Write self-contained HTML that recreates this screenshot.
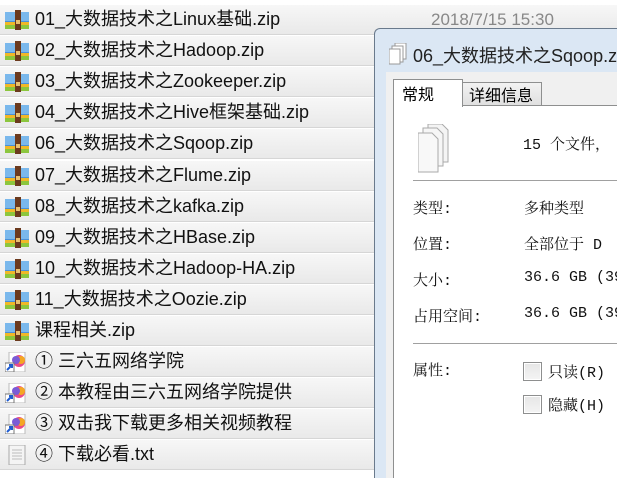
<!DOCTYPE html>
<html><head><meta charset="utf-8"><style>
*{margin:0;padding:0;box-sizing:border-box}
html,body{width:617px;height:478px;overflow:hidden}
body{background:#fff;position:relative;font-family:"Liberation Sans","Noto Sans CJK SC",sans-serif}
.row{position:absolute;left:0;width:617px;height:31px;background:linear-gradient(#f7f7f7,#e9e9e9);border-top:1px solid #fff;border-bottom:1px solid #d6d6d6;font-size:18px;color:#111;line-height:29px}
.row span{position:absolute;left:35px;top:0;white-space:nowrap}
.ic{position:absolute;left:5px;top:5px;width:24px;height:20px}
.dlg{position:absolute;left:374px;top:28px;width:243px;height:450px;background:#dbe7f4;border:1px solid #6a7a8c;border-right:none;border-bottom:none;border-radius:6px 0 0 0;overflow:hidden}
.title{position:absolute;left:38px;top:13px;font-size:18px;color:#222;white-space:nowrap}
.client{position:absolute;left:11px;top:43px;width:240px;height:420px;background:#f0f0f0}
.panel{position:absolute;width:230px;height:373px;background:#fff;border:1px solid #8e8f8f;border-right:none;border-bottom:none}
.tab{position:absolute;font-family:"Noto Sans CJK SC",sans-serif;font-size:16px;line-height:22px;color:#000;border:1px solid #8e8f8f}
.s{font-family:"Liberation Mono","Noto Serif CJK SC",monospace;font-size:15px;color:#111;position:absolute;white-space:nowrap}
.cb{position:absolute;width:19px;height:19px;border:1px solid #8e8f8f;background:linear-gradient(#e6e6e6,#f4f4f4);box-shadow:inset 0 0 0 1px #fff}
.hr{position:absolute;height:1px;background:#a0a0a0;left:413px;width:204px}
</style></head><body>
<svg width="0" height="0" style="position:absolute"><defs>
<g id="zip"><rect x="0" y="2" width="24" height="17" rx="1" fill="#4a90d8"/><rect x="0" y="2" width="24" height="9" fill="#7ab8ec"/><rect x="0" y="12" width="24" height="3" fill="#f0b828"/><rect x="0" y="15" width="24" height="4" fill="#8cc63e"/><rect x="10" y="0" width="6" height="20" fill="#6b3a1e"/><rect x="11" y="10" width="4" height="4" fill="#e8c070"/></g>
<g id="lnk"><rect x="4" y="0" width="16" height="20" fill="#fff" stroke="#bbb"/><circle cx="14" cy="9" r="6" fill="#e84a8a"/><circle cx="16" cy="8" r="4" fill="#f5a623"/><circle cx="11" cy="8" r="4" fill="#7b5cd6"/><rect x="0" y="11" width="9" height="9" fill="#fff" stroke="#777"/><path d="M2 18 L7 13 M4 13 H7 V16" stroke="#1e5bd0" stroke-width="2" fill="none"/></g>
</defs></svg>

<div class="row" style="top:4px"><svg class="ic"><use href="#zip"/></svg><span>01_大数据技术之Linux基础.zip</span><span style="left:431px;color:#888;font-size:17px">2018/7/15 15:30</span></div>
<div class="row" style="top:35px"><svg class="ic"><use href="#zip"/></svg><span>02_大数据技术之Hadoop.zip</span></div>
<div class="row" style="top:66px"><svg class="ic"><use href="#zip"/></svg><span>03_大数据技术之Zookeeper.zip</span></div>
<div class="row" style="top:97px"><svg class="ic"><use href="#zip"/></svg><span>04_大数据技术之Hive框架基础.zip</span></div>
<div class="row" style="top:128px"><svg class="ic"><use href="#zip"/></svg><span>06_大数据技术之Sqoop.zip</span></div>
<div class="row" style="top:160px"><svg class="ic"><use href="#zip"/></svg><span>07_大数据技术之Flume.zip</span></div>
<div class="row" style="top:191px"><svg class="ic"><use href="#zip"/></svg><span>08_大数据技术之kafka.zip</span></div>
<div class="row" style="top:222px"><svg class="ic"><use href="#zip"/></svg><span>09_大数据技术之HBase.zip</span></div>
<div class="row" style="top:253px"><svg class="ic"><use href="#zip"/></svg><span>10_大数据技术之Hadoop-HA.zip</span></div>
<div class="row" style="top:284px"><svg class="ic"><use href="#zip"/></svg><span>11_大数据技术之Oozie.zip</span></div>
<div class="row" style="top:315px"><svg class="ic"><use href="#zip"/></svg><span>课程相关.zip</span></div>
<div class="row" style="top:346px"><svg class="ic"><use href="#lnk"/></svg><span>① 三六五网络学院</span></div>
<div class="row" style="top:377px"><svg class="ic"><use href="#lnk"/></svg><span>② 本教程由三六五网络学院提供</span></div>
<div class="row" style="top:408px"><svg class="ic"><use href="#lnk"/></svg><span>③ 双击我下载更多相关视频教程</span></div>
<div class="row" style="top:439px"><svg class="ic" viewBox="0 0 24 20"><rect x="4" y="0" width="16" height="20" fill="#f4f4f4" stroke="#aaa"/><path d="M7 5H17M7 8H17M7 11H17M7 14H17" stroke="#bbb"/></svg><span>④ 下载必看.txt</span></div>

<div class="dlg">
<svg style="position:absolute;left:14px;top:14px" width="18" height="22"><rect x="6" y="0" width="11" height="16" fill="#fff" stroke="#999"/><rect x="3" y="3" width="11" height="16" fill="#fff" stroke="#999"/><rect x="0" y="6" width="11" height="15" fill="#fff" stroke="#999"/></svg>
<div class="title">06_大数据技术之Sqoop.zip</div>
<div class="client"></div>
</div>
<div class="panel" style="left:393px;top:105px"></div>
<div class="tab" style="left:462px;top:82px;width:80px;height:24px;background:linear-gradient(#f2f2f2,#e0e0e0);padding-left:6px">详细信息</div>
<div class="tab" style="left:393px;top:79px;width:70px;height:28px;background:#fff;border-bottom:none;padding-left:8px;line-height:26px">常规</div>
<svg style="position:absolute;left:418px;top:124px" width="40" height="50"><path d="M10 0H24L30 6V38H10Z" fill="#f4f4f4" stroke="#aaa"/><path d="M5 4H19L25 10V42H5Z" fill="#f6f6f6" stroke="#aaa"/><path d="M0 9H14L20 15V48H0Z" fill="#f8f8f8" stroke="#aaa"/></svg>
<div class="s" style="left:523px;top:133px">15 个文件，</div>
<div class="hr" style="top:180px"></div>
<div class="s" style="left:413px;top:197px">类型:</div><div class="s" style="left:524px;top:197px">多种类型</div>
<div class="s" style="left:413px;top:233px">位置:</div><div class="s" style="left:524px;top:233px">全部位于 D</div>
<div class="s" style="left:413px;top:269px">大小:</div><div class="s" style="left:524px;top:269px">36.6 GB (39</div>
<div class="s" style="left:413px;top:305px">占用空间:</div><div class="s" style="left:524px;top:305px">36.6 GB (39</div>
<div class="hr" style="top:343px"></div>
<div class="s" style="left:413px;top:359px">属性:</div>
<div class="cb" style="left:523px;top:362px"></div><div class="s" style="left:548px;top:361px">只读(R)</div>
<div class="cb" style="left:523px;top:395px"></div><div class="s" style="left:548px;top:394px">隐藏(H)</div>
</body></html>
